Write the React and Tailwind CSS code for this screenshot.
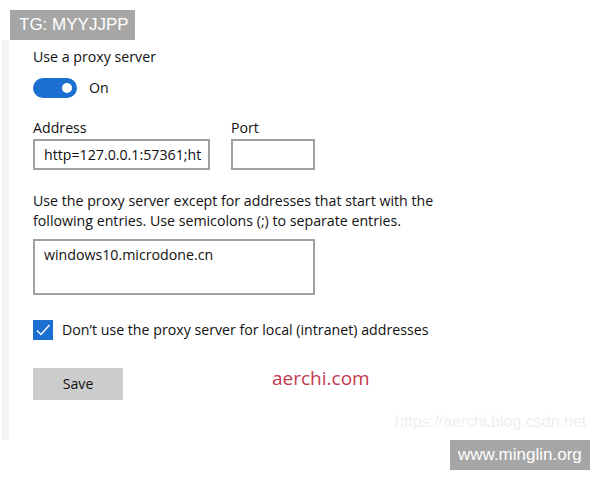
import React, { useState } from 'react';

const App = () => {
    const [proxyOn, setProxyOn] = useState(true);
    const [address, setAddress] = useState('http=127.0.0.1:57361;ht');
    const [port, setPort] = useState('');
    const [exceptions, setExceptions] = useState('windows10.microdone.cn');
    const [bypassLocal, setBypassLocal] = useState(true);

    return (
        <div className="relative w-[600px] h-[480px] bg-white text-[#111] font-['Open_Sans','Noto_Sans',sans-serif] overflow-hidden">
            {/* settings panel */}
            <div className="mt-[40px] ml-[2px] h-[400px] border-l-[7px] border-[#f4f4f4] pl-[24px] pt-[7px]">
                <div className="text-[14.2px] leading-[20px]">Use a proxy server</div>

                <div className="mt-[11px] flex items-center h-[20px]">
                    <button
                        onClick={() => setProxyOn(!proxyOn)}
                        className={`w-[44px] h-[20px] rounded-full flex items-center px-[5px] ${proxyOn ? 'bg-[#1a6fd0] justify-end' : 'bg-white border-2 border-[#333] justify-start'}`}
                    >
                        <span className={`block w-[10px] h-[10px] rounded-full ${proxyOn ? 'bg-white' : 'bg-[#333]'}`}></span>
                    </button>
                    <span className="ml-[12px] text-[14.2px] leading-[20px]">{proxyOn ? 'On' : 'Off'}</span>
                </div>

                <div className="mt-[20px] flex gap-[21px]">
                    <div className="flex flex-col">
                        <label className="text-[14.2px] leading-[20px]">Address</label>
                        <input
                            value={address}
                            onChange={e => setAddress(e.target.value)}
                            className="mt-[1px] w-[177px] h-[31px] border-2 border-[#a0a0a0] pl-[9px] pr-[1px] text-[14.2px] outline-none"
                        />
                    </div>
                    <div className="flex flex-col">
                        <label className="text-[14.2px] leading-[20px]">Port</label>
                        <input
                            value={port}
                            onChange={e => setPort(e.target.value)}
                            className="mt-[1px] w-[84px] h-[31px] border-2 border-[#a0a0a0] px-[9px] text-[14.2px] outline-none"
                        />
                    </div>
                </div>

                <p className="mt-[21px] text-[14.2px] leading-[20px] w-[420px]">
                    Use the proxy server except for addresses that start with the following entries. Use semicolons (;) to separate entries.
                </p>

                <textarea
                    value={exceptions}
                    onChange={e => setExceptions(e.target.value)}
                    className="mt-[8px] block w-[282px] h-[56px] border-2 border-[#a0a0a0] px-[9px] pt-[4px] text-[14.2px] leading-[20px] resize-none outline-none"
                />

                <label className="mt-[25px] flex items-center h-[20px] cursor-pointer">
                    <span
                        onClick={() => setBypassLocal(!bypassLocal)}
                        className={`w-[20px] h-[20px] flex items-center justify-center ${bypassLocal ? 'bg-[#1a6fd0]' : 'border-2 border-[#333]'}`}
                    >
                        {bypassLocal && (
                            <svg width="16" height="16" viewBox="0 0 16 16" fill="none">
                                <path d="M2 8.5 L6 12.5 L14.5 3" stroke="white" strokeWidth="1.4" />
                            </svg>
                        )}
                    </span>
                    <span className="ml-[9px] text-[14.2px] leading-[20px]">Don’t use the proxy server for local (intranet) addresses</span>
                </label>

                <button className="mt-[28px] w-[90px] h-[32px] bg-[#cccccc] text-[14.2px]">Save</button>
            </div>

            {/* watermarks */}
            <div className="absolute left-[10px] top-[10px] w-[125px] h-[30px] bg-[#a6a6a6] text-white text-[17px] leading-[30px] pl-[9px] font-['Liberation_Sans',sans-serif]">TG: MYYJJPP</div>
            <div className="absolute left-[272px] top-[365px] text-[#c4394d] text-[19px] leading-[26px] font-['Open_Sans',sans-serif]">aerchi.com</div>
            <div className="absolute left-[395px] top-[412px] text-[#efefef] text-[16px] leading-[20px] font-['Liberation_Sans',sans-serif]">https://aerchi.blog.csdn.net</div>
            <div className="absolute left-[450px] top-[440px] w-[140px] h-[30px] bg-[#a6a6a6] text-white text-[17px] leading-[30px] pl-[8px] font-['Liberation_Sans',sans-serif]">www.minglin.org</div>
        </div>
    );
};

export default App;
